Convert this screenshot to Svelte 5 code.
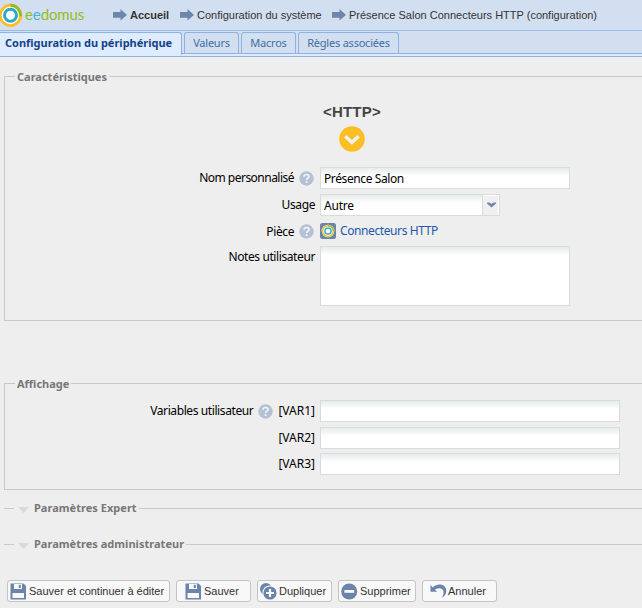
<script>
  const crumbs = ['Accueil', 'Configuration du système', 'Présence Salon Connecteurs HTTP (configuration)'];
  const tabs = ['Configuration du périphérique', 'Valeurs', 'Macros', 'Règles associées'];
  const variables = ['[VAR1]', '[VAR2]', '[VAR3]'];
  const buttons = [
    { label: 'Sauver et continuer à éditer', icon: 'disk' },
    { label: 'Sauver', icon: 'disk' },
    { label: 'Dupliquer', icon: 'copy' },
    { label: 'Supprimer', icon: 'minus' },
    { label: 'Annuler', icon: 'undo' }
  ];
</script>

{#snippet help()}
  <svg class="help" width="15" height="15" viewBox="0 0 15 15">
    <circle cx="7.5" cy="7.5" r="7.2" fill="#b4c0d3" />
    <path d="M5 5.8C5 4.2 6 3.5 7.5 3.5S10 4.3 10 5.6C10 7.2 7.6 7.2 7.6 9.1" fill="none" stroke="#f4f6f9" stroke-width="1.7" />
    <rect x="6.7" y="10.2" width="1.8" height="1.8" fill="#f4f6f9" />
  </svg>
{/snippet}

<div class="page">
  <header>
    <svg class="mark" width="22" height="28" viewBox="0 0 22 28">
      <circle cx="10.4" cy="15.4" r="11" fill="#fff" />
      <circle cx="10.4" cy="15.4" r="10.2" fill="none" stroke="#fcbe25" stroke-width="2.8" />
      <path d="M10.4 5.2A10.2 10.2 0 0 1 20.6 16.2" fill="none" stroke="#93bd1f" stroke-width="2.8" />
      <circle cx="10.5" cy="15.3" r="6" fill="none" stroke="#2ba9c9" stroke-width="3" />
    </svg>
    <span class="brand">e<i>e</i>domus</span>
    <nav>
      {#each crumbs as crumb, i}
        <span class="crumb c{i}">
          <svg width="15" height="12" viewBox="0 0 15 12"><path d="M0 3H7.5V0L14 6 7.5 11.4V8.8H0Z" fill="#6e86aa" /></svg>
          <span>{crumb}</span>
        </span>
      {/each}
    </nav>
  </header>

  <div class="tabs">
    {#each tabs as tab, i}
      <div class="tab t{i}" class:active={i === 0}><span>{tab}</span></div>
    {/each}
  </div>
  <div class="tabline"></div>

  <fieldset class="features">
    <legend><span>Caractéristiques</span></legend>
    <div class="device">
      <b>&lt;HTTP&gt;</b>
      <svg width="26" height="26" viewBox="0 0 26 26">
        <circle cx="13" cy="13" r="12.8" fill="#fcbe25" />
        <path d="M6.2 10.2 12.9 16.4 19.6 10.2" fill="none" stroke="#f3f1ed" stroke-width="3.5" />
      </svg>
    </div>
    <div class="row">
      <div class="label"><span class="name">Nom personnalisé</span>{@render help()}</div>
      <div class="field w250">Présence Salon</div>
    </div>
    <div class="row">
      <div class="label">Usage</div>
      <div class="field w162">Autre</div>
      <div class="trigger">
        <svg width="9" height="6" viewBox="0 0 9 6"><path d="M0 .5H2.6L4.5 2 6.4.5H9V1.5L4.5 5.5 0 1.5Z" fill="#6f87b0" /></svg>
      </div>
    </div>
    <div class="row room">
      <div class="label">Pièce{@render help()}</div>
      <svg class="roomicon" width="16" height="16" viewBox="0 0 16 16">
        <rect width="16" height="16" rx="2.5" fill="#6b84aa" />
        <circle cx="8" cy="8" r="6.3" fill="#fff" />
        <circle cx="8" cy="8" r="5.4" fill="none" stroke="#f5c23a" stroke-width="1.6" />
        <path d="M8 2.6A5.4 5.4 0 0 1 13.4 8" fill="none" stroke="#a5c043" stroke-width="1.6" />
        <circle cx="8" cy="8" r="3.1" fill="none" stroke="#3fb1d0" stroke-width="1.5" />
      </svg>
      <span class="link">Connecteurs HTTP</span>
    </div>
    <div class="row">
      <div class="label">Notes utilisateur</div>
      <div class="field area w250"></div>
    </div>
  </fieldset>

  <fieldset class="display">
    <legend><span>Affichage</span></legend>
    {#each variables as variable, i}
      <div class="row v{i}">
        <div class="label">
          {#if i === 0}<span>Variables utilisateur</span>{@render help()}{/if}
          <span class="var">{variable}</span>
        </div>
        <div class="field w300"></div>
      </div>
    {/each}
  </fieldset>

  {#each ['Paramètres Expert', 'Paramètres administrateur'] as title}
    <fieldset class="closed">
      <legend>
        <svg width="11" height="6" viewBox="0 0 11 6"><path d="M0 0H11L5.5 6Z" fill="#d9d9d9" /></svg>
        <span>{title}</span>
      </legend>
    </fieldset>
  {/each}

  <footer>
    {#each buttons as button, i}
      <div class="button b{i}">
        <svg width="17" height="17" viewBox="0 0 17 17">
          {#if button.icon === 'disk'}
            <path d="M.5.5H13.5L16 3V16.5H.5Z" fill="#6b84aa" />
            <path d="M4 1H12V6H4ZM2.5 10H14V15H2.5Z" fill="#f8f8f8" />
            <rect x="8.8" y="1.8" width="2" height="3.2" fill="#6b84aa" />
          {:else if button.icon === 'copy'}
            <circle cx="6" cy="6" r="6" fill="#6b84aa" />
            <circle cx="9.6" cy="9.7" r="7.2" fill="#f8f8f8" />
            <circle cx="10" cy="10" r="6.6" fill="#6b84aa" />
            <path d="M10 6V14M6 10H14" stroke="#f8f8f8" stroke-width="2.2" />
          {:else if button.icon === 'minus'}
            <circle cx="8.2" cy="8.5" r="8" fill="#6b84aa" />
            <rect x="3.4" y="7" width="9.8" height="2.8" fill="#f8f8f8" />
          {:else}
            <path d="M.5 2V8.7H7L5 6.7C8.5 4.2 13.4 5 13.6 9.2 13.6 11.5 12.8 13.2 11.7 15 14.7 13 16.5 10.6 16.3 7.5 15.8 1.1 7.9-.5 2.8 4.4Z" fill="#6b84aa" />
          {/if}
        </svg>
        <span>{button.label}</span>
      </div>
    {/each}
  </footer>
</div>

<style>
  :global(body) { margin: 0; background: #eee; }
  .page {
    width: 642px; height: 608px; overflow: hidden; box-sizing: border-box;
    background: #eee; color: #000; display: flex; flex-direction: column;
    font: 12px/15px "Noto Sans", sans-serif; white-space: nowrap;
  }
  svg { display: block; flex: none; }
  header {
    height: 30px; flex: none; display: flex; background: #d2dff0;
    border-bottom: 1px solid #99bbe8;
  }
  .brand { font: 15px/18px Lato, sans-serif; letter-spacing: -.1px; color: #93bd1f; padding: 5px 0 0 3px; width: 88px; }
  .brand i { font-style: normal; color: #3db5e0; }
  nav { display: flex; height: 30px; align-items: center; font: 11px/14px "Liberation Sans", sans-serif; color: #333; }
  .crumb { display: flex; align-items: center; gap: 2px; }
  .c0 { width: 67px; font-weight: bold; }
  .c1 { width: 152px; }

  .tabs { height: 22px; flex: none; display: flex; gap: 2px; background: #d2dff0; padding-top: 1px; box-sizing: border-box; }
  .tab {
    height: 21px; box-sizing: border-box; border: 1px solid #8db2e3; border-bottom: 0; letter-spacing: -.22px;
    border-radius: 3px 3px 0 0; font-size: 11px; line-height: 20px; color: #416da3; text-align: center;
  }
  .tab.active {
    height: 23px; border-left: 0; border-radius: 0 3px 0 0; background: #deecfd; color: #15428b; letter-spacing: 0;
    font-weight: bold; position: relative; text-align: left; padding-left: 5px;
  }
  .t0 { width: 182px; }
  .t1 { width: 55px; }
  .t2 { width: 55px; }
  .t3 { width: 101px; }
  .tabline { height: 2px; flex: none; background: #deecfd; border: solid #8db2e3; border-width: 1px 0; }

  fieldset {
    margin: 0 0 0 4px; padding: 0; border: 1px solid #c8c8c8; border-right: 0;
    box-sizing: border-box; flex: none; min-width: 0;
  }
  legend { margin-left: 10px; padding: 0 2px; height: 15px; font-size: 11px; font-weight: bold; color: #777; display: flex; align-items: center; }
  .features { margin-top: 12px; height: 252px; }
  .display { margin-top: 55px; height: 114px; }
  .closed { height: 15px; border-width: 1px 0 0; margin-top: 11px; }
  .closed + .closed { margin-top: 21px; }
  .closed legend { padding-left: 4px; gap: 5px; letter-spacing: .03px; }
  .closed legend svg { margin-top: 2px; }
  .closed legend span { margin-top: -2px; }

  .device { height: 83px; padding: 20px 0 0 318px; box-sizing: border-box; }
  .device b { display: block; font: bold 15px/16px "Liberation Sans", sans-serif; letter-spacing: .2px; color: #444; }
  .device svg { margin: 6px 0 0 16px; }
  .row { display: flex; height: 27px; letter-spacing: -.4px; }
  .room { height: 25px; }
  .label { width: 310px; margin-right: 5px; display: flex; justify-content: flex-end; height: 22px; line-height: 21px; }
  .name { letter-spacing: -.52px; }
  .help { margin: 4px 1px 0 5px; }
  .room .help { margin-top: 3px; }
  .field {
    height: 22px; box-sizing: border-box; border: 1px solid #d9dcdd; background: linear-gradient(#e6ebeb, #fff 8px);
    padding-left: 3px; line-height: 21px;
  }
  .w250 { width: 250px; }
  .w162 { width: 162px; border-right: 0; letter-spacing: -.2px; }
  .w300 { width: 300px; }
  .area { height: 60px; }
  .trigger {
    width: 18px; height: 22px; box-sizing: border-box; border: 1px solid #d9dcdd; background: #f0f0f0;
    display: flex; justify-content: center; padding-top: 7px; box-shadow: inset -1px 1px #fff;
  }
  .roomicon { margin-top: 2px; }
  .link { margin-left: 4px; line-height: 20px; color: #2059ad; }
  .display .row:nth-of-type(1) { margin-top: 9px; }
  .v1 { height: 26px; }
  .var { margin-left: 4px; letter-spacing: 0; }

  footer { display: flex; gap: 6px; margin: 28px 0 0 7px; flex: none; }
  .button {
    height: 22px; box-sizing: border-box; border: 1px solid #c4c4c4; border-radius: 3px; background: #f8f8f8;
    display: flex; align-items: center; gap: 2px; font: 11px/20px "Liberation Sans", sans-serif; color: #333;
  }
  .b0 { width: 163px; padding-left: 2px; }
  .b1 { width: 75px; padding-left: 8px; }
  .b2 { width: 75px; padding-left: 2px; }
  .b3 { width: 78px; padding-left: 2px; }
  .b4 { width: 75px; padding-left: 7px; gap: 1px; }
</style>
